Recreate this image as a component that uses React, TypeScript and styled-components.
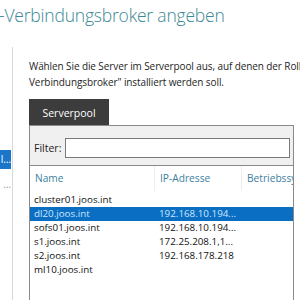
import React from 'react';
import styled, { createGlobalStyle } from 'styled-components';

const servers = [
  { name: 'cluster01.joos.int', ip: '' },
  { name: 'dl20.joos.int', ip: '192.168.10.194...', selected: true },
  { name: 'sofs01.joos.int', ip: '192.168.10.194...' },
  { name: 's1.joos.int', ip: '172.25.208.1,1...' },
  { name: 's2.joos.int', ip: '192.168.178.218' },
  { name: 'ml10.joos.int', ip: '' },
];

function App() {
  return (
    <Page>
      <GlobalStyle />
      <Title>-Verbindungsbroker angeben</Title>
      <Body>
        <Sidebar>
          <NavItem $active>l…</NavItem>
          <NavItem>…</NavItem>
        </Sidebar>
        <Content>
          <Description>
            Wählen Sie die Server im Serverpool aus, auf denen der Rolle
            <br />
            Verbindungsbroker" installiert werden soll.
          </Description>
          <Tab>Serverpool</Tab>
          <Panel>
            <FilterRow>
              <FilterLabel>Filter:</FilterLabel>
              <FilterInput />
            </FilterRow>
            <HeaderRow>
              <HeaderCell $width={125}>Name</HeaderCell>
              <HeaderCell $width={87}>IP-Adresse</HeaderCell>
              <HeaderCell $width={60} $last>Betriebssystem</HeaderCell>
            </HeaderRow>
            <List>
              {servers.map((s) => (
                <Row key={s.name} $selected={s.selected}>
                  <Cell $width={125}>{s.name}</Cell>
                  <Cell $width={87}>{s.ip}</Cell>
                  <Cell $width={50} />
                </Row>
              ))}
            </List>
          </Panel>
        </Content>
      </Body>
    </Page>
  );
}

const GlobalStyle = createGlobalStyle`
  html, body {
    margin: 0;
    padding: 0;
    background: #fff;
    overflow: hidden;
  }
  body {
    font-family: "Open Sans", "Noto Sans", sans-serif;
  }
`;

const Page = styled.div`
  width: 300px;
  height: 300px;
  overflow: hidden;
  display: flex;
  flex-direction: column;
`;

const Title = styled.div`
  margin-left: -1px;
  padding-top: 2px;
  height: 38px;
  font-size: 17.5px;
  font-weight: 300;
  line-height: 26px;
  color: #3b8896;
  white-space: nowrap;
  letter-spacing: -0.2px;
`;

const Body = styled.div`
  flex: 1;
  margin-top: 7px;
  display: flex;
  min-height: 0;
`;

const Sidebar = styled.div`
  width: 12px;
  border-right: 1px solid #d8d8d8;
  padding-top: 103px;
  display: flex;
  flex-direction: column;
  gap: 6px;
`;

const NavItem = styled.div<{ $active?: boolean }>`
  height: 19px;
  width: 11px;
  font-size: 10px;
  line-height: 19px;
  text-align: right;
  overflow: hidden;
  white-space: nowrap;
  color: ${(p) => (p.$active ? '#fff' : '#999')};
  background: ${(p) => (p.$active ? '#1a76c9' : 'transparent')};
`;

const Content = styled.div`
  flex: 1;
  padding-left: 16px;
  padding-right: 6px;
  display: flex;
  flex-direction: column;
  min-width: 0;
`;

const Description = styled.div`
  margin-top: 11px;
  font-size: 10px;
  line-height: 16px;
  color: #1e1e1e;
  white-space: nowrap;
  letter-spacing: -0.1px;
`;

const Tab = styled.div`
  margin-top: 9px;
  width: 80px;
  height: 26px;
  background: #3c3c3c;
  color: #fff;
  font-size: 10.5px;
  line-height: 28px;
  text-align: center;
`;

const Panel = styled.div`
  flex: 1;
  border-left: 1px solid #8a8a8a;
  border-right: 1px solid #8a8a8a;
  border-top: 1px solid #8a8a8a;
  display: flex;
  flex-direction: column;
`;

const FilterRow = styled.div`
  background: #f0f0f0;
  padding: 12px 3px 7px 4px;
  display: flex;
  align-items: center;
  gap: 4px;
  border-bottom: 1px solid #8a8a8a;
`;

const FilterLabel = styled.span`
  font-size: 10.5px;
  color: #1e1e1e;
`;

const FilterInput = styled.div`
  flex: 1;
  height: 18px;
  background: #fff;
  border: 1px solid #7a7a7a;
`;

const HeaderRow = styled.div`
  display: flex;
  height: 25px;
  margin-bottom: 2px;
`;

const HeaderCell = styled.div<{ $width: number; $last?: boolean }>`
  width: ${(p) => p.$width}px;
  flex: ${(p) => (p.$last ? 1 : 'none')};
  padding-left: 5px;
  box-sizing: border-box;
  font-size: 10.2px;
  line-height: 25px;
  color: #3a7fa0;
  white-space: nowrap;
  overflow: hidden;
  border-right: ${(p) => (p.$last ? 'none' : '1px solid #eeeeee')};
`;

const List = styled.div`
  display: flex;
  flex-direction: column;
`;

const Row = styled.div<{ $selected?: boolean }>`
  display: flex;
  height: 14px;
  background: ${(p) => (p.$selected ? '#0a6fc2' : 'transparent')};
  color: ${(p) => (p.$selected ? '#cfe6ff' : '#111')};
`;

const Cell = styled.div<{ $width: number }>`
  width: ${(p) => p.$width}px;
  padding-left: 4px;
  box-sizing: border-box;
  font-size: 9.8px;
  line-height: 14px;
  white-space: nowrap;
  overflow: hidden;
`;

export default App;
